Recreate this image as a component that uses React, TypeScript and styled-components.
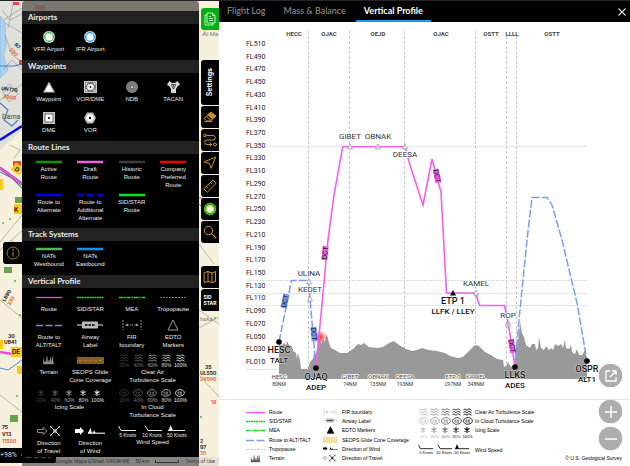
import React from 'react';
import styled, { createGlobalStyle, css } from 'styled-components';

const GlobalStyle = createGlobalStyle`
  * { box-sizing: border-box; }
  html, body { margin: 0; background: #fff; }
  body { font-family: "Liberation Sans", Arial, sans-serif; }
  button { border: 0; padding: 0; margin: 0; background: none; font: inherit; color: inherit; cursor: pointer; }
  svg { display: block; }
`;

/* ---------- page ---------- */

const Page = styled.div`
  display: grid;
  grid-template-columns: 219px minmax(0, 1fr);
  grid-template-rows: minmax(0, 1fr);
  height: 100vh;
  min-height: 466px;
  border-top: 1px solid #222426;
  overflow: hidden;
`;

const MapPane = styled.aside`
  position: relative;
  display: grid;
  grid-template-columns: 22px 177px minmax(0, 1fr);
  grid-template-rows: minmax(0, 1fr) 9px;
  overflow: hidden;
  background: #f5efdc;
`;

const Backdrop = styled.svg`
  position: absolute;
  inset: 0;
`;

const LeftEdge = styled.div`
  position: relative;
  padding: 241px 0 0 3px;
`;

const InfoTab = styled.button`
  display: grid;
  place-items: center;
  width: 19px;
  height: 22px;
  border-radius: 3px 0 0 3px;
  background: #000;
`;

const Panel = styled.div`
  position: relative;
  z-index: 2;
  padding-top: 10px;
  border-radius: 4px 4px 0 0;
  overflow: hidden;
  background: linear-gradient(rgba(90, 88, 82, 0.75) 10px, #000 10px);
  color: #ececec;
`;

const Heading = styled.h2`
  margin: 0;
  height: 13px;
  padding-left: 6px;
  background: #222;
  color: #ececec;
  font: 700 8px/13px Lato, sans-serif;
`;

const Items = styled.div<{ $rows: string; $top: number }>`
  display: grid;
  grid-template-columns: repeat(4, minmax(0, 1fr));
  grid-template-rows: ${(p) => p.$rows};
  padding: ${(p) => p.$top}px 5px 0 6px;
`;

const Item = styled.div<{ $wide?: boolean; $thin?: boolean }>`
  display: flex;
  flex-direction: column;
  align-items: center;
  gap: ${(p) => (p.$thin ? 1 : 2)}px;
  ${(p) => p.$wide && css`grid-column: span 2; gap: 0;`}
`;

const Caption = styled.span`
  font-size: 6px;
  line-height: 8px;
  text-align: center;
  white-space: pre;
`;

const Scale = styled.div<{ $compact?: boolean }>`
  display: grid;
  grid-template-columns: repeat(5, ${(p) => (p.$compact ? 11 : 14)}px);
  justify-items: center;
`;

const Step = styled.span<{ $level: number }>`
  display: flex;
  flex-direction: column;
  align-items: center;
  opacity: ${(p) => p.$level};
  font-size: 5px;
  line-height: 6px;
`;

const SmallStep = styled(Step)`
  font-size: 4px;
  line-height: 5px;
`;

const Winds = styled.div<{ $compact?: boolean }>`
  display: flex;
  gap: ${(p) => (p.$compact ? 2 : 5)}px;
  font-size: ${(p) => (p.$compact ? 4 : 5)}px;
  line-height: ${(p) => (p.$compact ? 5 : 6)}px;
  white-space: nowrap;
`;

const Wind = styled.span`
  display: flex;
  flex-direction: column;
  align-items: center;
`;

const Tools = styled.nav`
  position: relative;
  display: flex;
  flex-direction: column;
  gap: 1px;
  padding: 7px 0 0 2px;
`;

const Tool = styled.button<{ $active?: boolean; $before?: number }>`
  display: grid;
  place-items: center;
  flex: 0 0 22px;
  margin-top: ${(p) => p.$before ?? 0}px;
  border-radius: 3px 0 0 3px;
  background: ${(p) => (p.$active ? '#05ad12' : '#000')};
  color: #c8921c;
`;

const SettingsTool = styled(Tool)`
  flex-basis: 45px;
  color: #fff;
  font: 700 7px/18px Inter, sans-serif;
`;

const Vertical = styled.span`
  writing-mode: vertical-rl;
  transform: rotate(180deg);
`;

const SidStar = styled.span`
  color: #fff;
  font: 700 5px/6px Inter, sans-serif;
  text-align: left;
`;

const Credits = styled.div`
  position: relative;
  grid-column: 2 / 4;
  display: flex;
  align-items: center;
  gap: 6px;
  padding-left: 34px;
  background: linear-gradient(90deg, #858480 177px, #e5e1d6 177px);
  color: #35353a;
  font: 5px/9px Roboto, sans-serif;
  white-space: nowrap;
`;

const ScaleBar = styled.span`
  width: 24px;
  height: 3px;
  border: solid #333;
  border-width: 0 1px 1px;
`;

const TermsLink = styled.a`
  color: #44433f;
  text-decoration: none;
`;

const ZoomBadge = styled.div`
  position: absolute;
  z-index: 1;
  left: 0;
  bottom: 3px;
  display: flex;
  align-items: center;
  gap: 4px;
  width: 56px;
  height: 15px;
  border-radius: 0 2px 2px 0;
  background: #000;
  color: #ddd;
  font: 7px/15px Roboto, sans-serif;
`;

/* ---------- right side ---------- */

const Main = styled.main`
  position: relative;
  display: flex;
  flex-direction: column;
  min-width: 0;
  background: #fff;
`;

const TabBar = styled.header`
  display: flex;
  flex: 0 0 21px;
  gap: 2px;
  background: #000;
`;

const Tab = styled.button<{ $active?: boolean }>`
  padding: 0 8px;
  border-bottom: 2px solid ${(p) => (p.$active ? '#109bff' : '#000')};
  color: ${(p) => (p.$active ? '#fff' : '#989898')};
  font: ${(p) => (p.$active ? 700 : 400)} 9px/19px Lato, sans-serif;
  white-space: nowrap;
`;

const Close = styled.button`
  display: grid;
  place-items: center;
  width: 17px;
  margin-left: auto;
`;

const Chart = styled.svg`
  flex: 1 1 0;
  min-height: 0;
  width: 100%;
  font-family: Roboto, sans-serif;
`;

const Legend = styled.footer`
  display: grid;
  grid-template-columns: 76px 97px minmax(0, 1fr);
  grid-template-rows: minmax(0, 1fr);
  flex: 0 0 67px;
  min-height: 0;
  padding: 7px 8px 3px 26px;
  border-top: 1px solid #e6e6e6;
  color: #000;
  font-size: 5px;
`;

const Column = styled.div`
  display: grid;
  grid-template-rows: repeat(6, minmax(0, 1fr));
  min-height: 0;
`;

const Key = styled.div<{ $icon: number; $gap: number }>`
  display: grid;
  grid-template-columns: ${(p) => p.$icon}px auto;
  column-gap: ${(p) => p.$gap}px;
  justify-content: start;
  align-items: center;
  justify-items: start;
  white-space: nowrap;
  & > svg { justify-self: center; }
`;

const TallKey = styled(Key)`
  grid-row: span 2;
  align-items: start;
  line-height: 9px;
`;

const Source = styled.div`
  line-height: 9px;
  text-align: right;
`;

const Round = styled.button`
  display: grid;
  place-items: center;
  width: 23px;
  height: 23px;
  border-radius: 50%;
  background: #adadad;
  box-shadow: 0 0 1px #999;
`;

const Floating = styled.div`
  position: absolute;
  right: 8px;
  bottom: 16px;
  display: grid;
  gap: 4px;
  & > :first-child { margin-bottom: 9px; }
`;

/* ---------- symbols ---------- */

const Bar = ({ color, dash }: { color: string; dash?: string }) => (
  <svg width="26" height="4"><path d="M0 2H26" stroke={color} strokeWidth="2.6" strokeDasharray={dash} /></svg>
);

const ThinLine = ({ color, dash, w = 26, h = 12, s = 1.3 }: { color: string; dash?: string; w?: number; h?: number; s?: number }) => (
  <svg width={w} height={h}><path d={`M0 ${h / 2 + 0.5}H${w}`} stroke={color} strokeWidth={s} strokeDasharray={dash} /></svg>
);

const Airport = ({ color }: { color: string }) => (
  <svg width="12" height="12">
    <circle cx="6" cy="6" r="5.9" fill="#fff" />
    <circle cx="6" cy="6" r="4.4" fill="#fff" stroke={color} strokeWidth="1.3" />
    <path d="M6 0V2.4M6 9.6V12M0 6H2.4M9.6 6H12" stroke={color} />
  </svg>
);

const WaypointIcon = () => <svg width="12" height="12"><path d="M6 .5 12 11.5H0Z" fill="#bbb" /><path d="M6 3 10 10.4H2Z" fill="#fff" /></svg>;
const VorDme = () => (
  <svg width="13" height="12">
    <rect width="13" height="12" fill="#c8c8c8" /><rect x="1.4" y="1.4" width="10.2" height="9.2" fill="#eee" stroke="#555" strokeWidth=".5" />
    <path d="M4 2.2H9L11.2 6 9 9.8H4L1.8 6Z" fill="#ddd" stroke="#333" strokeWidth=".9" /><circle cx="6.5" cy="6" r="2.3" fill="#fff" /><circle cx="6.5" cy="6" r=".9" fill="#111" />
  </svg>
);
const Ndb = () => (
  <svg width="12" height="12">
    <circle cx="6" cy="6" r="6" fill="#6b6b6b" />
    {[5.3, 3.9, 2.5].map((r) => <circle key={r} cx="6" cy="6" r={r} fill="none" stroke="#aaa" strokeWidth=".8" strokeDasharray="1 .6" />)}
    <circle cx="6" cy="6" r="1" fill="#ddd" />
  </svg>
);
const Tacan = () => (
  <svg width="13" height="12"><path d="M2.5 0 5 2H8L10.500 0 13 3.600 10.500 5.500 9 8V12H4V8L2.500 5.500 0 3.600Z" fill="#d8d8d8" /><path d="M4.300 3.500H8.700L6.500 8Z" fill="#fff" stroke="#222" strokeWidth=".8" /><circle cx="6.500" cy="5" r=".7" /></svg>
);
const Dme = () => <svg width="12" height="12"><rect width="12" height="12" fill="#c9c9c9" /><rect x="2" y="2" width="8" height="8" fill="#fff" stroke="#333" strokeWidth=".7" /><circle cx="6" cy="6" r="1" /></svg>;
const Vor = () => <svg width="12" height="12"><path d="M3 .5H9L12 6 9 11.500H3L0 6Z" fill="#bbb" /><path d="M4 2.500H8L10 6 8 9.500H4L2 6Z" fill="#fff" /><circle cx="6" cy="6" r="1.200" /></svg>;

const Airway = ({ w = 26, h = 12, body = '#b9b9b9', line = '#aaa' }: { w?: number; h?: number; body?: string; line?: string }) => (
  <svg width={w} height={h} viewBox="0 0 26 12"><path d="M0 6H26" stroke={line} strokeWidth="1.400" /><rect x="5" y="2.500" width="16" height="7" rx="1" fill={body} /><path d="M8 6H18" stroke="#222" strokeWidth="2" strokeDasharray="2.500 1" /></svg>
);
const Fir = ({ w = 20, h = 12, color = '#999' }: { w?: number; h?: number; color?: string }) => (
  <svg width={w} height={h} viewBox="0 0 20 12" fill={color} stroke={color}><path d="M1 1V11M19 1V11" strokeDasharray="2 1" strokeWidth=".9" /><path d="M4 6H16" strokeWidth=".8" strokeDasharray="3 1" /><path d="M3 6 6 4.500V7.500ZM17 6 14 4.500V7.500Z" stroke="none" /></svg>
);
const Edto = ({ solid }: { solid?: boolean }) => (
  <svg width={solid ? 9 : 12} height={solid ? 8 : 12} viewBox="0 0 12 12"><path d="M6 1 11 11H1Z" fill={solid ? '#000' : 'none'} stroke={solid ? '#000' : '#999'} /></svg>
);
const Spikes = ({ color, w = 11, h = 12 }: { color: string; w?: number; h?: number }) => (
  <svg width={w} height={h} viewBox="0 1 11 10"><path d="M.5 10V5L1.500 9 2.500 7 3.200 9.500 4 2.500 5 9 6 6 7 9.500 7.500 3 8.500 9 9.500 2.500 10.500 10Z" fill={color} stroke={color} strokeWidth=".4" /></svg>
);
const Seops = ({ w, h, fill, stroke }: { w: number; h: number; fill: string; stroke: string }) => (
  <svg width={w} height={h}><rect x=".5" y=".5" width={w - 1} height={h - 1} fill={fill} stroke={stroke} strokeDasharray="2 1" /><path d={`M2 ${h / 2}H${w - 2}`} stroke={stroke} strokeWidth=".6" strokeDasharray="3 2" /></svg>
);
const Plane = ({ x, color }: { x: number; color: string }) => (
  <g transform={`translate(${x} 0)`} stroke={color} fill="none" strokeWidth="1"><path d="M1 1 11 11M11 1 1 11" /><path d="M3.500 .8 1 3.500M8.500 .8 11 3.500M.8 8.500 3.500 11M8.500 11 11 8.500" strokeWidth=".7" /><circle cx="6" cy="6" r="1.300" fill={color} /></g>
);
const Travel = () => (
  <svg width="24" height="12" viewBox="0 0 24 12"><path d="M.5 4.500H6V2.500L10 6 6 9.500V7.500H.500Z" fill="none" stroke="#aaa" strokeWidth=".8" /><Plane x={12} color="#ccc" /></svg>
);
const SmallTravel = () => (
  <svg width="14" height="8" viewBox="0 0 21 12"><circle cx="3" cy="6" r="2.200" fill="none" stroke="#888" /><Plane x={8} color="#222" /></svg>
);
const WindDir = ({ w = 30, h = 12, color = '#fff' }: { w?: number; h?: number; color?: string }) => (
  <svg width={w} height={h} viewBox="0 0 30 12"><path d="M0 4H5V2L9 6 5 10V8H0ZM13 8 15.500 3 17 8ZM18 8 19 5 20.500 8Z" fill={color} /><path d="M13 8.200H30" stroke={color} strokeWidth="1.100" /></svg>
);

const WaveGlyph = () => <svg width="9" height="8" viewBox="0 0 9 8" fill="none" stroke="currentColor" strokeWidth=".9">{[1.500, 4, 6.500].map((y) => <path key={y} d={`M.5 ${y + 0.7}Q1.500 ${y - 1.400} 2.800 ${y}T5 ${y}T7 ${y - 0.200}L8.500 ${y + 0.800}`} />)}</svg>;
const CloudGlyph = () => <svg width="10" height="8" viewBox="0 0 10 8" fill="none" stroke="currentColor" strokeWidth=".8"><path d="M2.500 1.300Q5-.5 7.500 1.200Q10 2 9.300 4.500Q8.500 7 6 7Q3.500 8 1.700 6.300Q-.2 5 .8 3Q1 1.700 2.500 1.300Z" /><path d="M2.500 3.200H7.500M2.500 5H7.500" strokeDasharray="2 .5" /></svg>;
const IceGlyph = () => <svg width="8" height="8" viewBox="0 0 8 8" stroke="currentColor" strokeWidth="1.100"><path d="M4 1V7M1.500 2.500 6.500 5.500M6.500 2.500 1.500 5.500" /></svg>;

const levels = [20, 40, 60, 80, 100];
const panelOpacity = [0.25, 0.42, 0.65, 0.88, 1];
const keyOpacity = [0.25, 0.4, 0.6, 0.82, 1];

const IntensityScale = ({ glyph: Glyph }: { glyph: React.FC }) => (
  <Scale>{levels.map((l, i) => <Step key={l} $level={panelOpacity[i]}><Glyph />{l}%</Step>)}</Scale>
);
const KeyScale = ({ glyph: Glyph, labels }: { glyph: React.FC; labels?: boolean }) => (
  <Scale $compact>{levels.map((l, i) => <SmallStep key={l} $level={keyOpacity[i]}><Glyph />{labels && `${l}%`}</SmallStep>)}</Scale>
);

const barbs = ['M1 1V2L3 5.500H18', 'M2 .5 5 5.500H19', 'M1 5.500H18'];
const WindSpeeds = ({ compact }: { compact?: boolean }) => (
  <Winds $compact={compact}>
    {[5, 10, 50].map((n, i) => (
      <Wind key={n}>
        <svg width={compact ? 16 : 19} height={compact ? 6 : 7} viewBox="0 0 19 7"><path d={barbs[i]} fill="none" stroke="currentColor" />{n === 50 && <path d="M1.500 5.500 3.500 0 6 5.500Z" fill="currentColor" />}</svg>
        {n} Knots
      </Wind>
    ))}
  </Winds>
);

/* ---------- map backdrop ---------- */

const MapDrawing = () => (
  <Backdrop width="219" height="465" viewBox="0 1 219 465" aria-hidden="true">
    <rect width="219" height="466" fill="#f6f0dc" />
    <path d="M0 0H22V130L0 150Z" fill="#dfe0d9" />
    <path d="M22 1H199V12H22Z" fill="#d5d2c6" />
    <path d="M0 16Q7 22 5 34 8 46 3 55L8 70 0 78Z" fill="#a9d3f5" stroke="#86a9c8" strokeWidth=".6" />
    <g fill="none" stroke="#8d8f8b" strokeWidth=".6">
      <path d="M4 20 22 8M5 23 22 33M5 35 12 55 22 62M3 70 12 60 22 70M0 100 22 84M2 10 10 20 22 14M14 0 8 28M0 242 22 215M0 250 22 231M199 140 219 158M199 244 214 264M199 310 219 324M199 328 219 317M199 375 219 397M202 36 219 8M0 300 22 318M0 395 22 412M12 240 22 262" />
      <path d="M2 90 10 84 18 94 9 102ZM10 145 20 150 14 158" />
    </g>
    <path d="M0 66H14L22 64M0 103 8 110 4 120 12 126 18 120M0 172 12 178 22 188" fill="none" stroke="#3f7fb4" strokeWidth="1.100" />
    <path d="M0 140 22 126" stroke="#0808e8" strokeWidth="2.400" />
    <path d="M0 168 22 184" stroke="#8b318b" strokeWidth="2.800" /><path d="M0 168 22 184" stroke="#f160e4" strokeWidth="1.800" />
    <path d="M0 352 12 354" stroke="#e94dd4" strokeWidth="2.400" />
    <path d="M0 368 8 370 22 360" fill="none" stroke="#4d8cc0" />
    <g fill="#e5473f"><rect x="13" y="2" width="6" height="3" /><rect x="35" y="5" width="10" height="5" opacity=".6" /><rect x="19" y="60" width="4" height="5" /><rect x="13" y="161" width="8" height="5" /></g>
    <g fill="#69a14f"><rect x="15" y="197" width="7" height="6" /><rect x="4" y="267" width="8" height="6" /><rect x="10" y="415" width="8" height="7" /></g>
    <g fill="#48b548"><circle cx="3" cy="223" r="1" /><circle cx="10" cy="219" r="1" /><circle cx="15" cy="281" r="1" /><circle cx="20" cy="315" r="1" /><circle cx="17" cy="396" r="1" /><circle cx="201" cy="417" r="1" /><circle cx="215" cy="318" r="1" /></g>
    <g fill="#f9c81d"><rect x="-1" y="179" width="4" height="11" /><rect x="13" y="164" width="10" height="9" transform="rotate(35 17 168)" /><rect x="14" y="204" width="10" height="10" /><rect x="11" y="347" width="12" height="10" /><rect x="0" y="340" width="3" height="9" /><rect x="17" y="366" width="6" height="8" /></g>
    <g fontFamily="Inter, sans-serif" fontWeight="700" fontSize="5" fill="#222">
      <text x="14" y="170" transform="rotate(35 14 170)" fontSize="6">D</text><text x="14" y="212" fontSize="6">K</text><text x="12" y="354" fontSize="6">DE</text>
      <text x="1" y="90" transform="rotate(8 1 90)">UNT70</text><text x="3" y="98" fill="#e3632b" transform="rotate(8 3 98)">2900</text>
      <text x="14" y="45" transform="rotate(45 14 45)">R7</text><text x="9" y="50" fill="#e3632b" transform="rotate(45 9 50)">290</text>
      <text x="8" y="338">30</text><text x="4" y="344">UB41</text>
      <text x="5" y="302" transform="rotate(-60 5 302)">L890</text><text x="10" y="306" fill="#e3632b" transform="rotate(-60 10 306)">330</text>
      <text x="2" y="429">75</text><text x="2" y="436">V13</text><text x="2" y="443" fill="#e3632b">11500</text>
      <text x="205" y="369">35</text><text x="200" y="375">UL550</text><text x="200" y="381" fill="#e3632b">24500</text>
      <text x="200" y="443">2</text><text x="200" y="449">97</text><text x="200" y="455" fill="#e3632b">70</text>
      <text x="211" y="404" fill="#e3632b">16</text>
    </g>
    <g fontFamily="Roboto, sans-serif" fontSize="6" fill="#777"><text x="2" y="119" fontSize="7" fill="#444">Dama</text><text x="203" y="36">Al Ma</text><text x="200" y="321">hska</text></g>
    <path d="M199 198H203M199 204 202 207" stroke="#d8512c" />
  </Backdrop>
);

/* ---------- tool drawings ---------- */

const stroke = { fill: 'none', stroke: 'currentColor', strokeWidth: 1, strokeLinejoin: 'round' as const, strokeLinecap: 'round' as const };
const toolIcons: Record<string, React.ReactNode> = {
  eraser: <svg width="14" height="14" {...stroke}><path d="M1.500 8 8 2 13 6 7 11H4Z" /><path d="M8 2.500 12.500 6.300 9.500 9 5 5.200Z" fill="currentColor" /><path d="M3.500 6.500 8 10.500M2 11.500H9" /></svg>,
  route: <svg width="14" height="14" {...stroke}><circle cx="2" cy="2.500" r="1.400" /><circle cx="12" cy="11.500" r="1.500" /><path d="M3.500 2.500H10A2.200 2.200 0 0 1 10 7H4A2.200 2.200 0 0 0 4 11.500H8.500M7 10 8.700 11.500 7 13" /></svg>,
  arrow: <svg width="14" height="14" {...stroke}><path d="M12.500 1.500 8 12.500 6.500 7.500 1.500 6Z" /></svg>,
  ruler: <svg width="14" height="14" {...stroke}><path d="M1 9.500 10 1 13 4.500 4.500 13ZM3.500 7.500 5 9M5.500 5.500 6.500 6.500M7.500 3.500 9 5" /></svg>,
  sun: <svg width="14" height="14"><circle cx="7" cy="7" r="6.400" fill="#14702f" /><circle cx="7" cy="7" r="5.300" fill="none" stroke="#3cc34a" strokeWidth="1.600" strokeDasharray="2 .6" /><circle cx="7" cy="7" r="4.300" fill="#d9d93c" /><circle cx="7" cy="7" r="2.800" fill="#fffef0" /></svg>,
  search: <svg width="14" height="14" {...stroke}><circle cx="5.500" cy="5.500" r="4.200" /><path d="M8.600 8.600 12.800 12.800" strokeWidth="1.300" /></svg>,
};

const tools = [['eraser', 'Erase'], ['route', 'Route'], ['arrow', 'Direct to'], ['ruler', 'Measure'], ['sun', 'Brightness'], ['search', 'Search']];

const MapTools = () => (
  <Tools aria-label="Map tools">
    <Tool $active aria-label="Flight plan">
      <svg width="12" height="14" fill="none" stroke="#c9ffc9" strokeWidth=".9"><path d="M3 1H8.500L11 3.500V11H3ZM8.500 1V3.500H11M3 3H1V13H9V11M5 4.500H7M5 6.500H9M5 8.500H9" /></svg>
    </Tool>
    <SettingsTool $before={29}><Vertical>Settings</Vertical></SettingsTool>
    {tools.map(([id, label]) => <Tool key={id} aria-label={label}>{toolIcons[id]}</Tool>)}
    <Tool $before={22} aria-label="Charts"><svg width="14" height="14" {...stroke}><path d="M1.500 2.500 5 1.500 9 3 12.500 1.500V11.500L9 12.500 5 11.500 1.500 12.500ZM5 1.500V11.500M9 3V12.500" /></svg></Tool>
    <Tool aria-label="SID STAR"><SidStar>SID<br />STAR</SidStar></Tool>
  </Tools>
);

const Entry = ({ icon, text, thin, wide }: { icon: React.ReactNode; text: string; thin?: boolean; wide?: boolean }) => (
  <Item $thin={thin} $wide={wide}>{icon}<Caption>{text}</Caption></Item>
);

const LegendPanel = () => (
  <Panel>
    <Heading>Airports</Heading>
    <Items $rows="29px" $top={7}>
      <Entry icon={<Airport color="#45b64a" />} text="VFR Airport" />
      <Entry icon={<Airport color="#2196f3" />} text="IFR Airport" />
    </Items>
    <Heading>Waypoints</Heading>
    <Items $rows="31px 29px" $top={8}>
      <Entry icon={<WaypointIcon />} text="Waypoint" />
      <Entry icon={<VorDme />} text="VOR/DME" />
      <Entry icon={<Ndb />} text="NDB" />
      <Entry icon={<Tacan />} text="TACAN" />
      <Entry icon={<Dme />} text="DME" />
      <Entry icon={<Vor />} text="VOR" />
    </Items>
    <Heading>Route Lines</Heading>
    <Items $rows="33px 35px" $top={6}>
      <Entry thin icon={<Bar color="#0c960c" />} text={'Active\nRoute'} />
      <Entry thin icon={<Bar color="#ef5fe3" />} text={'Draft\nRoute'} />
      <Entry thin icon={<Bar color="#3c3c3c" />} text={'Historic\nRoute'} />
      <Entry thin icon={<Bar color="#f20000" />} text={'Company\nPreferred\nRoute'} />
      <Entry thin icon={<Bar color="#0000f0" />} text={'Route to\nAlternate'} />
      <Entry thin icon={<Bar color="#0000f0" dash="6 4" />} text={'Route to\nAdditional\nAlternate'} />
      <Entry thin icon={<Bar color="#00e51c" />} text={'SID/STAR\nRoute'} />
    </Items>
    <Heading>Track Systems</Heading>
    <Items $rows="28px" $top={6}>
      <Entry thin icon={<Bar color="#4cb950" />} text={'NATs\nWestbound'} />
      <Entry thin icon={<Bar color="#0b94f4" />} text={'NATs\nEastbound'} />
    </Items>
    <Heading>Vertical Profile</Heading>
    <Items $rows="28px 35px 35px 36px 32px" $top={3}>
      <Entry icon={<ThinLine color="#e849dc" />} text="Route" />
      <Entry icon={<ThinLine color="#00f000" dash="2 .5" />} text="SID/STAR" />
      <Entry icon={<ThinLine color="#00f000" dash="4 1 1.500 1" />} text="MEA" />
      <Entry icon={<ThinLine color="#777" dash="2 1" s={1} />} text="Tropopause" />
      <Entry icon={<ThinLine color="#7391e8" dash="7 2.500" />} text={'Route to\nALT/TALT'} />
      <Entry icon={<Airway />} text={'Airway\nLabel'} />
      <Entry icon={<Fir />} text={'FIR\nboundary'} />
      <Entry icon={<Edto />} text={'EDTO\nMarkers'} />
      <Entry icon={<Spikes color="#999" />} text="Terrain" />
      <Entry icon={<svg width="27" height="12" viewBox="0 -3 27 12"><rect x=".5" y=".5" width="26" height="6" fill="#80601c" stroke="#a57c25" strokeDasharray="2 1" /><path d="M2 3.500H25" stroke="#b08a38" strokeWidth=".7" strokeDasharray="3 2" /></svg>} text={'SEOPS Glide\nCone Coverage'} />
      <Entry wide icon={<IntensityScale glyph={WaveGlyph} />} text={'Clear Air\nTurbulence Scale'} />
      <Entry wide icon={<IntensityScale glyph={IceGlyph} />} text="Icing Scale" />
      <Entry wide icon={<IntensityScale glyph={CloudGlyph} />} text={'In Cloud\nTurbulance Scale'} />
      <Entry icon={<Travel />} text={'Direction\nof Travel'} />
      <Entry icon={<WindDir />} text={'Direction\nof Wind'} />
      <Entry wide icon={<WindSpeeds />} text="Wind Speed" />
    </Items>
  </Panel>
);

/* ---------- vertical profile ---------- */

const flightLevels = Array.from({ length: 26 }, (_, i) => 510 - i * 20);
const firs: [string, number][] = [['HECC', 294], ['OJAC', 329], ['OEJD', 378], ['OJAC', 441], ['OSTT', 491], ['LLLL', 512], ['OSTT', 552]];
const firLines = [309, 350, 405, 476, 507, 517];
const distances: [string, string, number][] = [['HESC', '80NM', 279], ['GIBET', '74NM', 350], ['OBNAK', '135NM', 378], ['DEESA', '193NM', 405], ['ETP:1', '297NM', 453], ['KAMEL', '348NM', 476]];
const waypoints: [string, number, number][] = [['GIBET', 350, 139], ['OBNAK', 378, 139], ['DEESA', 405, 157], ['ULINA', 309, 276], ['KEDET', 310, 292], ['KAMEL', 476, 286], ['ROP', 508, 318]];
const markers = [[350, 147], [378, 147], [405, 147], [309, 282], [310, 299], [476, 293]];
const airports: [string, string, number, number, number][] = [
  ['HESC', 'TALT', 279, 342, 353], ['OJAQ', 'ADEP', 316, 368, 380], ['LLKS', 'ADES', 515, 367, 378], ['OSPR', 'ALT1', 587, 361, 372],
];
const dcts: [number, number, number, string][] = [[285, 301, -78, '#7297f6'], [314, 334, 85, '#7297f6'], [325, 253, -84, '#f25be8'], [437, 176, 78, '#f25be8'], [512, 346, 80, '#f25be8']];

const terrain = 'M279 379V341L281 346 284 343 286 345 287 341 289 345 292 346 293 351 296 353 297 359 298 353 300 360 301 369H308L310 362 313 359 314 353 316 355 318 341 320 336 321 344 323 339 325 342 326 334 328 338 329 343 331 348 335 350 340 353H347L353 349 358 344 361 345 364 343 369 347 377 348 383 347 389 343 394 341 399 345 406 349 412 351 417 350 422 348 425 349 429 350 437 351 445 353 450 356 458 358 463 357 467 353 471 349 475 345 479 346 485 352 491 355 497 359 503 360 504 367 507 365 508 362 511 367 514 365 516 345 518 342 519 333 520 322 522 333 524 337 526 345 530 348 532 344 535 344 536 350 538 348 539 337 541 348 544 350 546 346 549 350 551 348 553 350 555 344 558 346 561 344 563 348 565 340 566 348 569 349 571 345 572 352 575 354 577 349 579 355 582 355 585 350 587 360V379Z';

const Profile = () => (
  <Chart viewBox="219 22 411 377" preserveAspectRatio="xMidYMin meet" role="img" aria-label="Vertical profile">
    <defs><radialGradient id="hazard"><stop offset="0" stopColor="#ff2929" /><stop offset=".5" stopColor="#ff5a50" stopOpacity=".7" /><stop offset="1" stopColor="#ff8a80" stopOpacity="0" /></radialGradient></defs>
    <g fontSize="7" fill="#222">{flightLevels.map((fl, i) => <text key={fl} x="246" y={46 + Math.round(i * 12.72)}>FL{String(fl).padStart(3, '0')}</text>)}</g>
    <g stroke="#c6c6c6" strokeWidth="1" strokeDasharray="3 2">
      {firLines.map((x) => <path key={x} d={`M${x - 0.5} ${x > 500 ? 36 : 31}V369`} />)}
    </g>
    <g stroke="#d0d0d0" strokeWidth=".8" strokeDasharray="2 1"><path d="M266 146.500H587M247 280.500H587M247 293.500H587M247 305.500H587M247 369.500H279" /></g>
    <g fontSize="6" fontWeight="700" fill="#444" textAnchor="middle">{firs.map(([n, x]) => <text key={x} x={x} y="36">{n}</text>)}</g>
    <path d={terrain} fill="#999" />
    <circle cx="320" cy="337" r="7" fill="url(#hazard)" />
    <g fill="none" strokeWidth="1.500" stroke="#7b9df3" strokeDasharray="8 2">
      <path d="M279 342 291.500 280.500H308.500L310 299 316 368" /><path d="M515 367 519 320 527 240 532 197.500H547L552 205 562 240 577 303 587 361" />
    </g>
    <path d="M316 368 328 240 334 195 342.700 146.800H405L410 165 423 205 432 159 441 192 446.500 293H475.500L479.500 305.500H504.500L508 322 515 367" fill="none" stroke="#f45fec" strokeWidth="1.600" />
    {dcts.map(([x, y, r, c]) => <g key={x} transform={`translate(${x} ${y}) rotate(${r})`}><rect x="-7" y="-3" width="14" height="6" fill={c} /><text y="2.500" fontSize="7" textAnchor="middle" fill="#222">DCT</text></g>)}
    <g fill="#fff" stroke="#888" strokeWidth=".7">{markers.map(([x, y]) => <path key={x} d={`M${x} ${y - 3}L${x + 2.5} ${y + 2}H${x - 2.5}Z`} />)}<path d="M506 323H510V327H506Z" /><circle cx="508" cy="325" r="1" /></g>
    <path d="M453 290 456 295.500H450Z" />
    <g textAnchor="middle" fill="#333" stroke="#fff" strokeWidth="1.500" paintOrder="stroke" strokeLinejoin="round">
      <g fontSize="8">{waypoints.map(([n, x, y]) => <text key={x + n} x={x} y={y}>{n}</text>)}</g>
      {distances.map(([n, d, x]) => <React.Fragment key={x}><text x={x} y="379" fontSize="6" fill="#444">{n}</text><text x={x} y="386" fontSize="5">{d}</text></React.Fragment>)}
    </g>
    <g textAnchor="middle" fill="#111" fontWeight="500" stroke="#fff" strokeWidth="1" strokeOpacity=".6" paintOrder="stroke">
      {airports.map(([n, role, x, dot, y]) => <g key={n}><text x={x} y={y} fontSize="9">{n}</text><text x={x} y={y + 10} fontSize="8">{role}</text><circle cx={x} cy={dot} r="2.800" fill="#000" stroke="none" /></g>)}
      <text x="453" y="304" fontSize="9">ETP 1</text><text x="453" y="314" fontSize="8">LLFK / LLEY</text>
    </g>
  </Chart>
);

const ProfileLegend = () => (
  <Legend>
    <Column>
      <Key $icon={20} $gap={4}><ThinLine color="#f04fe0" w={19} h={6} />Route</Key>
      <Key $icon={20} $gap={4}><ThinLine color="#00e000" dash="2 .5" w={19} h={6} />SID/STAR</Key>
      <Key $icon={20} $gap={4}><ThinLine color="#00e000" dash="4 1 1.500 1" w={19} h={6} />MEA</Key>
      <Key $icon={20} $gap={4}><ThinLine color="#7b9df3" dash="8 2.500" w={19} h={6} />Route to ALT/TALT</Key>
      <Key $icon={20} $gap={4}><ThinLine color="#aaa" dash="1.500 1.500" w={19} h={6} s={0.8} />Tropopause</Key>
      <Key $icon={20} $gap={4}><Spikes color="#555" h={9} />Terrain</Key>
    </Column>
    <Column>
      <Key $icon={18} $gap={3}><Fir w={14} h={8} color="#aaa" />FIR boundary</Key>
      <Key $icon={18} $gap={3}><Airway w={14} h={7} body="#bbb" line="#ccc" />Airway Label</Key>
      <Key $icon={18} $gap={3}><Edto solid />EDTO Markers</Key>
      <Key $icon={18} $gap={3}><Seops w={14} h={6} fill="#f8e2a4" stroke="#efd086" />SEOPS Glide Cone Coverage</Key>
      <Key $icon={18} $gap={3}><WindDir w={15} h={7} color="#000" />Direction of Wind</Key>
      <Key $icon={18} $gap={3}><SmallTravel />Direction of Travel</Key>
    </Column>
    <Column>
      <Key $icon={55} $gap={2}><KeyScale glyph={WaveGlyph} />Clear Air Turbulence Scale</Key>
      <Key $icon={55} $gap={2}><KeyScale glyph={CloudGlyph} />In Cloud Turbulance Scale</Key>
      <TallKey $icon={55} $gap={2}><KeyScale glyph={IceGlyph} labels />Icing Scale</TallKey>
      <Key $icon={55} $gap={2}><WindSpeeds compact />Wind Speed</Key>
      <Source>© U.S. Geological Survey</Source>
    </Column>
  </Legend>
);

export default function App() {
  return (
    <>
      <GlobalStyle />
      <Page>
        <MapPane>
          <MapDrawing />
          <LeftEdge>
            <InfoTab aria-label="Legend">
              <svg width="14" height="14" fill="none" stroke="#c8921c"><circle cx="7" cy="7" r="6" strokeWidth=".8" /><path d="M7 6V10.500" /><circle cx="7" cy="4" r=".4" /></svg>
            </InfoTab>
          </LeftEdge>
          <LegendPanel />
          <MapTools />
          <Credits>Google, Mapa GISrael, ORION-ME <span>50 km</span><ScaleBar /><TermsLink href="#terms">Terms of Use</TermsLink></Credits>
          <ZoomBadge>+98%<svg width="30" height="6" stroke="#bbb" fill="none"><path d="M0 2H5M6 3V5M9 3V5" /><path d="M13 4.500H30" stroke="#444" strokeDasharray="5 2" /></svg></ZoomBadge>
        </MapPane>
        <Main>
          <TabBar>
            <Tab>Flight Log</Tab>
            <Tab>Mass &amp; Balance</Tab>
            <Tab $active aria-current="page">Vertical Profile</Tab>
            <Close aria-label="Close"><svg width="8" height="8" stroke="#ddd" strokeWidth="1.100"><path d="M.5 .5 7.500 7.500M7.500 .5 .5 7.500" /></svg></Close>
          </TabBar>
          <Profile />
          <ProfileLegend />
          <Floating>
            <Round aria-label="Open in new window"><svg width="12" height="12" fill="none" stroke="#fff" strokeWidth="1.300"><path d="M5 1H1V11H11V7M7 1H11V5M11 1 5 7" /></svg></Round>
            <Round aria-label="Zoom in"><svg width="12" height="12" stroke="#fff" strokeWidth="1.500"><path d="M6 0V12M0 6H12" /></svg></Round>
            <Round aria-label="Zoom out"><svg width="12" height="12" stroke="#fff" strokeWidth="1.500"><path d="M0 6H12" /></svg></Round>
          </Floating>
        </Main>
      </Page>
    </>
  );
}
